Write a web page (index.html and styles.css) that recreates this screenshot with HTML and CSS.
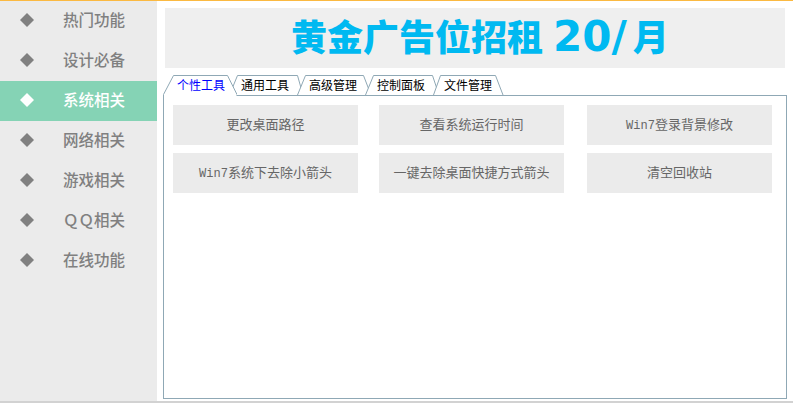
FILE: index.html
```html
<!DOCTYPE html>
<html lang="zh-CN">
<head>
<meta charset="utf-8">
<title>工具箱</title>
<link rel="stylesheet" href="styles.css">
</head>
<body>
<div class="app">
  <nav class="sidebar">
    <a class="nav-item"><svg class="diamond" viewBox="0 0 14 14"><polygon points="7,0 14,7 7,14 0,7"/></svg><span>热门功能</span></a>
    <a class="nav-item"><svg class="diamond" viewBox="0 0 14 14"><polygon points="7,0 14,7 7,14 0,7"/></svg><span>设计必备</span></a>
    <a class="nav-item active"><svg class="diamond" viewBox="0 0 14 14"><polygon points="7,0 14,7 7,14 0,7"/></svg><span>系统相关</span></a>
    <a class="nav-item"><svg class="diamond" viewBox="0 0 14 14"><polygon points="7,0 14,7 7,14 0,7"/></svg><span>网络相关</span></a>
    <a class="nav-item"><svg class="diamond" viewBox="0 0 14 14"><polygon points="7,0 14,7 7,14 0,7"/></svg><span>游戏相关</span></a>
    <a class="nav-item"><svg class="diamond" viewBox="0 0 14 14"><polygon points="7,0 14,7 7,14 0,7"/></svg><span>ＱＱ相关</span></a>
    <a class="nav-item"><svg class="diamond" viewBox="0 0 14 14"><polygon points="7,0 14,7 7,14 0,7"/></svg><span>在线功能</span></a>
  </nav>
  <main class="main">
    <div class="banner">黄金广告位招租<span class="price">20/</span><span class="month">月</span></div>
    <div class="tabs">
      <div class="tab tab-active"><svg class="tab-shape" viewBox="0 0 74 21"><polyline points="0.5,21 0.5,19.5 10.5,0.5 64.5,0.5 74,19.5 74,21"/></svg><span>个性工具</span></div>
      <div class="tab"><svg class="tab-shape" viewBox="0 0 74 21"><polyline points="0.5,20 8.5,0.5 68.5,0.5 74,20"/></svg><span>通用工具</span></div>
      <div class="tab"><svg class="tab-shape" viewBox="0 0 74 21"><polyline points="0.5,20 8.5,0.5 66.5,0.5 74,20"/></svg><span>高级管理</span></div>
      <div class="tab"><svg class="tab-shape" viewBox="0 0 74 21"><polyline points="0.5,20 8.5,0.5 67.5,0.5 74,20"/></svg><span>控制面板</span></div>
      <div class="tab tab-last"><svg class="tab-shape" viewBox="0 0 74 21"><polyline points="0.5,20 7.5,0.5 62.5,0.5 70,20"/></svg><span>文件管理</span></div>
    </div>
    <section class="panel">
      <a class="tool"><span>更改桌面路径</span></a>
      <a class="tool"><span>查看系统运行时间</span></a>
      <a class="tool"><span><span class="latin">Win7</span>登录背景修改</span></a>
      <a class="tool"><span><span class="latin">Win7</span>系统下去除小箭头</span></a>
      <a class="tool"><span>一键去除桌面快捷方式箭头</span></a>
      <a class="tool"><span>清空回收站</span></a>
    </section>
  </main>
</div>
</body>
</html>
```
FILE: styles.css
```css
* { box-sizing: border-box; }
html, body { margin: 0; padding: 0; background: #fff; }
body { width: 793px; height: 403px; overflow: hidden; font-family: "Noto Sans CJK SC", sans-serif; }
.app {
  display: flex;
  height: 403px;
  border-top: 1px solid #fbb941;
  border-bottom: 2px solid #d2d2d2;
}
.sidebar { width: 157px; background: #ebebeb; flex: none; }
.nav-item {
  display: flex;
  align-items: center;
  height: 40px;
  padding-left: 20px;
  color: #808080;
  font: 500 15.5px/1 "Noto Sans CJK SC", sans-serif;
}
.nav-item span { margin: -2px 0 0 29px; }
.diamond { width: 14px; height: 14px; fill: #808080; flex: none; margin-top: -2px; }
.nav-item.active { background: #85d3b5; color: #fff; }
.active .diamond { fill: #fff; }
.main { flex: 1; padding: 7px 6px 0 6px; display: flex; flex-direction: column; }
.banner {
  margin: 0 2px;
  height: 60px;
  padding-left: 126px;
  background: #efefef;
  color: #00b9f1;
  font: 900 36px/54px "Noto Sans CJK SC", sans-serif;
  white-space: nowrap;
  overflow: hidden;
}
.price { font: 700 42px/1 "DejaVu Sans", sans-serif; margin-left: 10px; }
.month { margin-left: 6px; }
.tabs { display: flex; height: 20px; margin-top: 7px; position: relative; z-index: 1; }
.tab {
  position: relative;
  width: 74px;
  padding-left: 12px;
  margin-right: -6px;
  color: #000;
  font: 12px/20px "Noto Sans CJK SC", sans-serif;
}
.tab span { position: relative; }
.tab-active { color: #00f; padding-left: 14px; margin-right: -8px; z-index: 1; }
.tab-last { padding-left: 11px; }
.tab-shape { position: absolute; left: 0; top: 0; width: 74px; height: 21px; fill: #fff; stroke: #8fa8b5; stroke-width: 1; }
.panel {
  width: 624px;
  height: 304px;
  border: 1px solid #8fa8b5;
  padding: 9px 0 0 9px;
  display: grid;
  grid-template-columns: 206px 208px 185px;
  grid-auto-rows: 40px;
  row-gap: 8px;
  align-content: start;
}
.tool {
  width: 185px;
  display: flex;
  align-items: center;
  justify-content: center;
  padding-bottom: 3px;
  background: #ebebeb;
  color: #666;
  font-size: 13px;
}
.latin { font: 12px "Liberation Mono", monospace; }
```
